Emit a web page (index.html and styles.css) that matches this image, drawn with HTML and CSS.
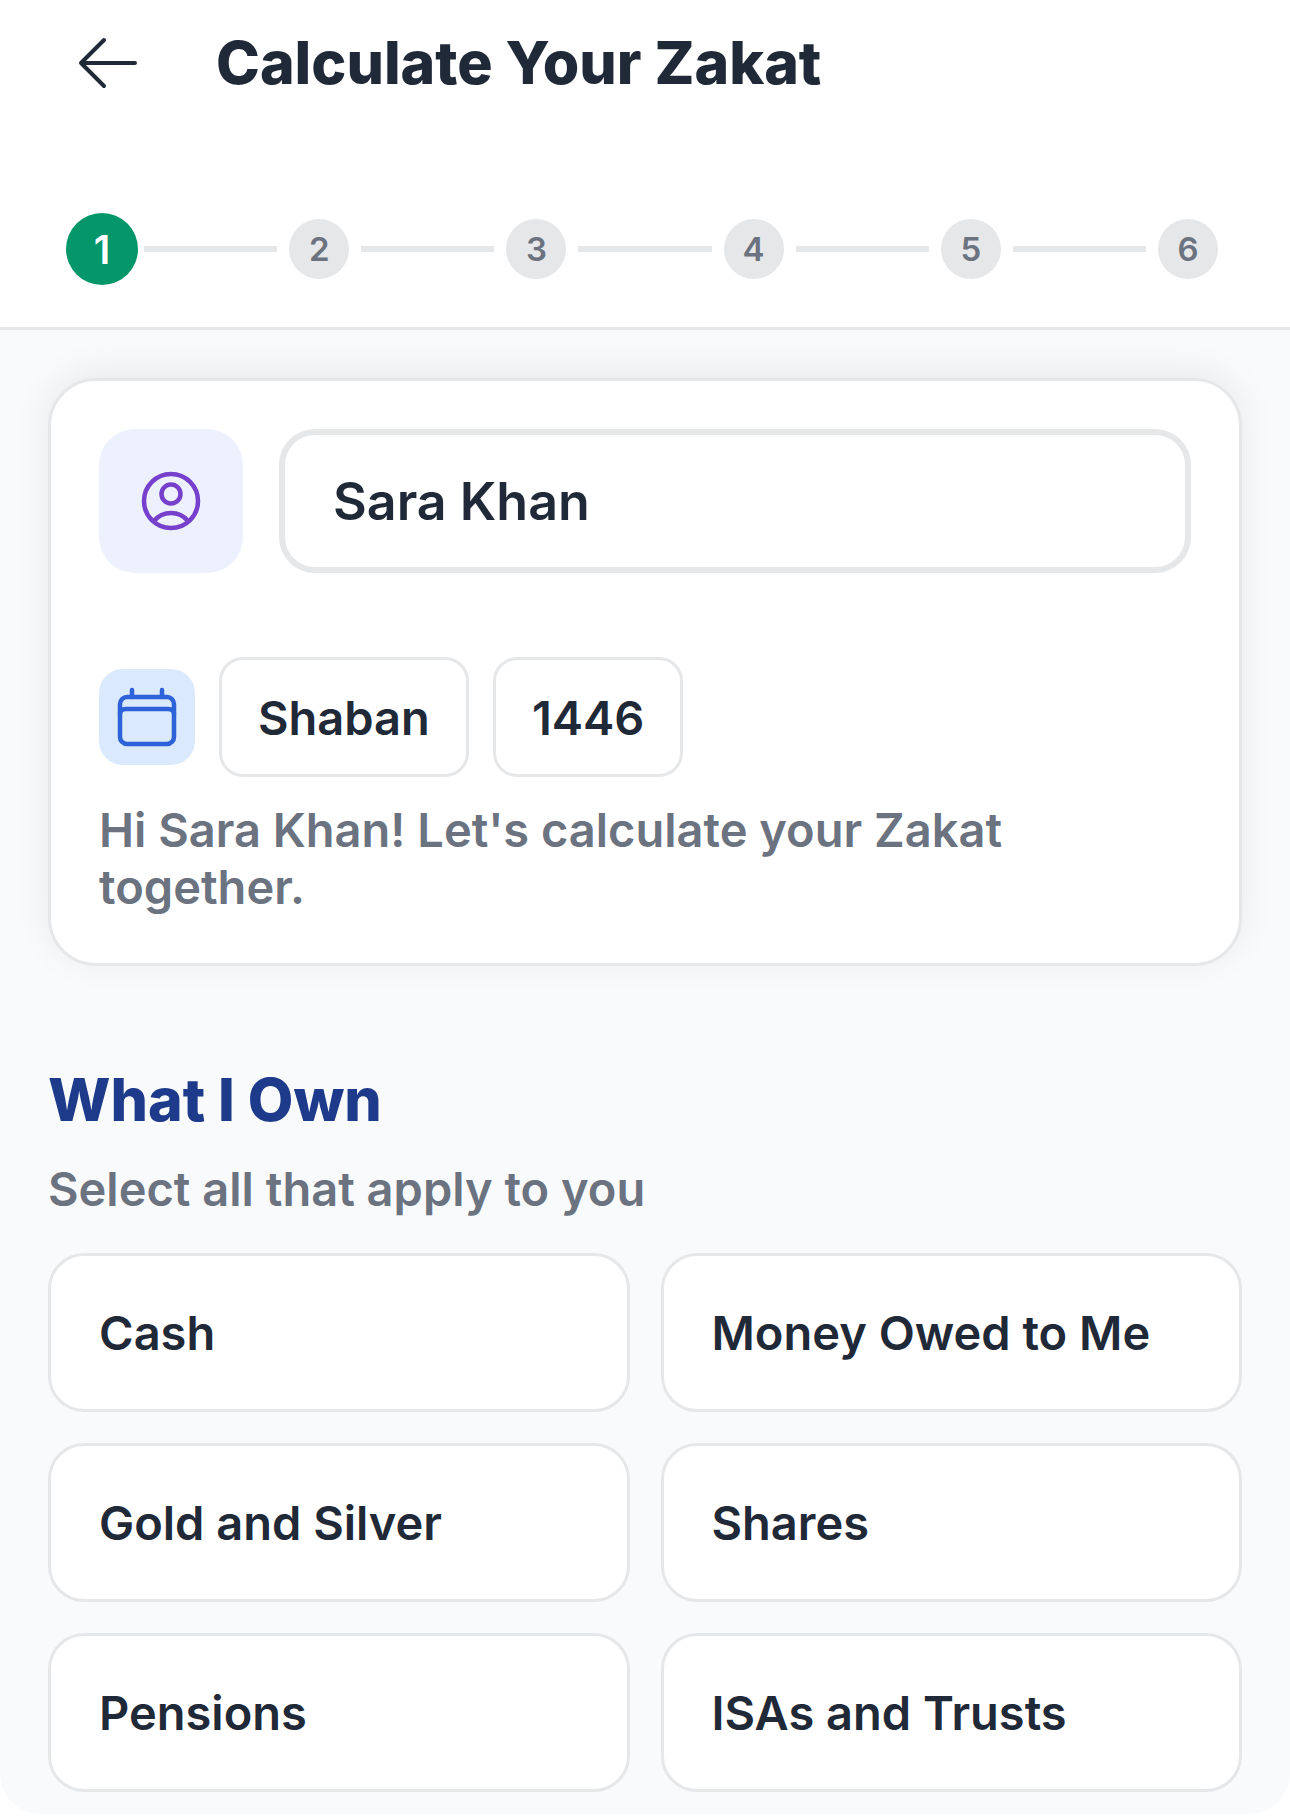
FILE: index.html
```html
<!DOCTYPE html>
<html lang="en">
<head>
<meta charset="utf-8">
<meta name="viewport" content="width=device-width, initial-scale=1">
<title>Calculate Your Zakat</title>
<link rel="stylesheet" href="styles.css">
</head>
<body>
<header class="header">
  <div class="title-bar">
    <button class="back" type="button" aria-label="Back">
      <svg class="icon" viewBox="0 0 72 72" fill="none" stroke="currentColor" stroke-width="4" stroke-linecap="round" stroke-linejoin="round"><path d="M32 13 9 36l23 23M9 36h54"/></svg>
    </button>
    <h1 class="title">Calculate Your Zakat</h1>
  </div>
  <ol class="steps">
    <li class="step step-active" aria-current="step">1</li>
    <li class="line" role="presentation"></li>
    <li class="step">2</li>
    <li class="line" role="presentation"></li>
    <li class="step">3</li>
    <li class="line" role="presentation"></li>
    <li class="step">4</li>
    <li class="line" role="presentation"></li>
    <li class="step">5</li>
    <li class="line" role="presentation"></li>
    <li class="step">6</li>
  </ol>
</header>
<main class="content">
  <section class="card">
    <div class="name-row">
      <label class="badge badge-user" for="name" aria-label="Your name">
        <svg class="icon" viewBox="0 0 72 72" fill="none" stroke="currentColor" stroke-width="4.500" stroke-linecap="round"><circle cx="36" cy="36" r="27"/><circle cx="36" cy="29" r="9.500"/><path d="M19 56a22 22 0 0 1 34 0"/></svg>
      </label>
      <input class="name-input" id="name" type="text" value="Sara Khan">
    </div>
    <div class="date-row">
      <span class="badge badge-date">
        <svg class="icon" viewBox="0 0 72 72" fill="none" stroke="currentColor" stroke-width="4.500" stroke-linecap="round"><rect x="9" y="16" width="54" height="47" rx="7"/><path d="M21 9v7M51 9v7M9 33q0-5 6-5h42q6 0 6 5"/></svg>
      </span>
      <button class="chip" type="button">Shaban</button>
      <button class="chip" type="button">1446</button>
    </div>
    <p class="greeting">Hi Sara Khan! Let's calculate your Zakat together.</p>
  </section>
  <section class="assets">
    <h2 class="section-title">What I Own</h2>
    <p class="section-note">Select all that apply to you</p>
    <div class="grid">
      <button class="tile" type="button">Cash</button>
      <button class="tile" type="button">Money Owed to Me</button>
      <button class="tile" type="button">Gold and Silver</button>
      <button class="tile" type="button">Shares</button>
      <button class="tile" type="button">Pensions</button>
      <button class="tile" type="button">ISAs and Trusts</button>
    </div>
  </section>
</main>
</body>
</html>
```
FILE: styles.css
```css
* {
  box-sizing: border-box;
}

body {
  margin: 0;
  background: #fff;
  color: #1f2937;
  font-family: Inter, "Liberation Sans", sans-serif;
  font-size: 47px;
  font-weight: 600;
  line-height: 57px;
}

h1, h2, p, ol {
  margin: 0;
  padding: 0;
}

button, input {
  margin: 0;
  color: inherit;
  font: inherit;
}

.icon {
  display: block;
  width: 72px;
  height: 72px;
}

.header {
  padding: 27px 72px 42px;
  border-bottom: 3px solid #e6e7e9;
}

.title-bar {
  display: flex;
  align-items: center;
  gap: 72px;
}

.back {
  padding: 0;
  border: 0;
  background: none;
}

.title {
  font-size: 59px;
  font-weight: 800;
  line-height: 72px;
}

.steps {
  display: flex;
  align-items: center;
  gap: 12px;
  height: 72px;
  margin-top: 114px;
  list-style: none;
}

.step {
  display: flex;
  flex: none;
  align-items: center;
  justify-content: center;
  width: 60px;
  height: 60px;
  border-radius: 50%;
  background: #e6e7e9;
  color: #6b7280;
  font-size: 33px;
}

.step-active {
  width: 72px;
  height: 72px;
  margin: 0 -6px;
  background: #059669;
  color: #fff;
  font-size: 39px;
}

.line {
  flex: 1;
  height: 6px;
  background: #e6e7e9;
}

.content {
  padding: 48px 48px 22px;
  border-radius: 0 0 40px 40px;
  background: #f9fafc;
}

.card {
  padding: 48px;
  border: 3px solid #e6e7e9;
  border-radius: 48px;
  background: #fff;
  box-shadow: 0 -6px 36px rgba(0, 0, 0, 0.07);
}

.name-row {
  display: flex;
  gap: 36px;
}

.badge {
  display: flex;
  flex: none;
  align-items: center;
  justify-content: center;
}

.badge-user {
  width: 144px;
  height: 144px;
  border-radius: 36px;
  background: #edf1fd;
  color: #7640cc;
}

.name-input {
  flex: 1;
  min-width: 0;
  height: 144px;
  padding: 0 48px;
  border: 6px solid #e6e7e9;
  border-radius: 36px;
  background: #fff;
  font-size: 52px;
}

.date-row {
  display: flex;
  align-items: center;
  gap: 24px;
  margin: 84px 0 24px;
}

.badge-date {
  width: 96px;
  height: 96px;
  border-radius: 24px;
  background: #dbe9fd;
  color: #2d62d9;
}

.chip {
  height: 120px;
  padding: 0 36px;
  border: 3px solid #e6e7e9;
  border-radius: 24px;
  background: #fff;
}

.greeting {
  color: #6b7280;
}

.assets {
  margin-top: 98px;
}

.section-title {
  color: #1e3a8a;
  font-size: 59px;
  font-weight: 800;
  line-height: 72px;
}

.section-note {
  margin: 24px 0 36px;
  color: #6b7280;
}

.grid {
  display: grid;
  grid-template-columns: 1fr 1fr;
  gap: 31px;
}

.tile {
  padding: 48px;
  border: 3px solid #e6e7e9;
  border-radius: 36px;
  background: #fff;
  text-align: left;
}
```
